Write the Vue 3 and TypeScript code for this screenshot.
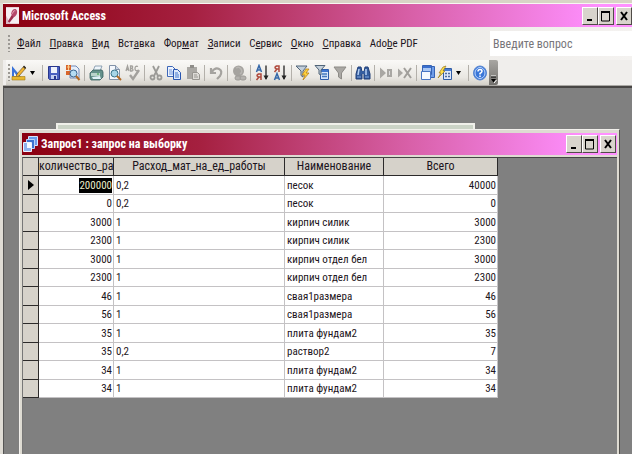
<script setup lang="ts">
interface MenuEntry { before: string; key: string; after: string }
interface Row { qty: number; rate: string; name: string; total: number }
interface Tool { icon: string; label: string; drop?: boolean }

const menu: MenuEntry[] = [
  { before: '', key: 'Ф', after: 'айл' },
  { before: '', key: 'П', after: 'равка' },
  { before: '', key: 'В', after: 'ид' },
  { before: 'Вст', key: 'а', after: 'вка' },
  { before: 'Фор', key: 'м', after: 'ат' },
  { before: '', key: 'З', after: 'аписи' },
  { before: 'С', key: 'е', after: 'рвис' },
  { before: '', key: 'О', after: 'кно' },
  { before: '', key: 'С', after: 'правка' },
  { before: 'Ado', key: 'b', after: 'e PDF' },
]

const groups: Tool[][] = [
  [{ icon: 'design', label: 'Вид', drop: true }],
  [{ icon: 'save', label: 'Сохранить' }, { icon: 'find-file', label: 'Найти файл' }],
  [{ icon: 'print', label: 'Печать' }, { icon: 'preview', label: 'Просмотр' }, { icon: 'spell', label: 'Орфография' }],
  [{ icon: 'cut', label: 'Вырезать' }, { icon: 'copy', label: 'Копировать' }, { icon: 'paste', label: 'Вставить' }],
  [{ icon: 'undo', label: 'Отменить' }],
  [{ icon: 'link', label: 'Гиперссылка' }],
  [{ icon: 'sort-asc', label: 'По возрастанию' }, { icon: 'sort-desc', label: 'По убыванию' }],
  [{ icon: 'filter-sel', label: 'Фильтр по выделенному' }, { icon: 'filter-form', label: 'Изменить фильтр' }, { icon: 'filter', label: 'Применить фильтр' }],
  [{ icon: 'find', label: 'Найти' }],
  [{ icon: 'new-rec', label: 'Новая запись' }, { icon: 'del-rec', label: 'Удалить запись' }],
  [{ icon: 'database', label: 'Окно базы данных' }, { icon: 'new-obj', label: 'Новый объект', drop: true }],
  [{ icon: 'help', label: 'Справка' }],
]

const rows: Row[] = [
  { qty: 200000, rate: '0,2', name: 'песок', total: 40000 },
  { qty: 0, rate: '0,2', name: 'песок', total: 0 },
  { qty: 3000, rate: '1', name: 'кирпич силик', total: 3000 },
  { qty: 2300, rate: '1', name: 'кирпич силик', total: 2300 },
  { qty: 3000, rate: '1', name: 'кирпич отдел бел', total: 3000 },
  { qty: 2300, rate: '1', name: 'кирпич отдел бел', total: 2300 },
  { qty: 46, rate: '1', name: 'свая1размера', total: 46 },
  { qty: 56, rate: '1', name: 'свая1размера', total: 56 },
  { qty: 35, rate: '1', name: 'плита фундам2', total: 35 },
  { qty: 35, rate: '0,2', name: 'раствор2', total: 7 },
  { qty: 34, rate: '1', name: 'плита фундам2', total: 34 },
  { qty: 34, rate: '1', name: 'плита фундам2', total: 34 },
]
</script>

<template>
  <div class="app">
    <header class="titlebar">
      <svg class="app-icon" viewBox="0 0 14 18" aria-hidden="true">
        <rect width="14" height="18" fill="#f6eef2" />
        <path d="M0 18V9l5 9z" fill="#d9b9c6" />
        <path d="M2 15.500 6.500 8 9 10 4 16.500z" fill="#9c2f50" />
        <path d="M5.500 7C6 3 9 1 11 2.500s1 7-3 8.500z" fill="#b5486b" />
        <path d="M7 7c.5-2.500 2-3.500 3-3" stroke="#e9b3c5" fill="none" />
      </svg>
      <h1>Microsoft Access</h1>
      <div class="controls">
        <button class="ctl" aria-label="Свернуть"><svg viewBox="0 0 14 16"><path d="M4 12h5" stroke="#000" stroke-width="2" /></svg></button>
        <button class="ctl" aria-label="Развернуть"><svg viewBox="0 0 14 16"><path d="M2.500 4v9h8V4" stroke="#000" fill="none" /><path d="M2 4h9" stroke="#000" stroke-width="2" /></svg></button>
        <button class="ctl last" aria-label="Закрыть"><svg viewBox="0 0 14 16"><path d="m4 4 6 8m0-8-6 8" stroke="#000" stroke-width="2" /></svg></button>
      </div>
    </header>

    <div class="menubar">
      <span class="grip"></span>
      <nav class="menu">
        <a v-for="m in menu" :key="m.before + m.key + m.after" href="#">{{ m.before }}<u>{{ m.key }}</u>{{ m.after }}</a>
      </nav>
      <div class="ask">
        <input type="text" placeholder="Введите вопрос" aria-label="Введите вопрос" />
        <button aria-label="Список вопросов"><svg viewBox="0 0 8 5"><path d="M0 0h8L4 5z" fill="#000" /></svg></button>
      </div>
    </div>

    <div class="toolbar-row">
      <div class="toolbar">
        <span class="grip"></span>
        <template v-for="(g, gi) in groups" :key="gi">
          <span v-if="gi" class="sep"></span>
          <button v-for="t in g" :key="t.icon" class="tool" :class="{ drop: t.drop }" :aria-label="t.label">
            <svg class="ico" viewBox="0 0 16 18" aria-hidden="true">
              <g v-if="t.icon === 'design'">
                <path d="M1 2v12h10z" fill="#3a72d8" /><path d="M3 8v4h3z" fill="#f4f4f0" />
                <path d="m6 10 7-8 2 2-7 8-3 1z" fill="#f2b632" stroke="#5a4320" stroke-width=".6" /><path d="m12 3 1-1.500 2 2L14 5z" fill="#333" />
                <path d="M1 12.500h13V16H1z" fill="#e8b72e" stroke="#a37a14" stroke-width=".6" />
              </g>
              <g v-else-if="t.icon === 'save'">
                <path d="M2.500 2.500h11v13h-10l-1-1z" fill="#4a5fc0" stroke="#28368c" />
                <path d="M5 3h6v6H5z" fill="#eef1fb" /><path d="M5 11h6v4H5z" fill="#c4cdf0" /><path d="M8 12h2v3H8z" fill="#28368c" />
              </g>
              <g v-else-if="t.icon === 'find-file'">
                <path d="M5 2h6l3 3v9H5z" fill="#e6eefa" stroke="#7089b8" /><path d="M1 1h5v5H1zM1 7h4v4H1z" fill="#d9652b" /><path d="M2 3h3M3.500 1v5" stroke="#f7cd8c" />
                <circle cx="8.500" cy="9.500" r="3.500" fill="#b5dcf3" stroke="#39648f" /><path d="m11 12 3.500 4" stroke="#b36a25" stroke-width="2" />
              </g>
              <g v-else-if="t.icon === 'print'">
                <path d="m5 7 2-5h7l-2 5z" fill="#eef5fb" stroke="#7a8fa5" stroke-width=".8" />
                <path d="m2 9 3-3h9l1 2v5l-3 3H3l-1-2z" fill="#64918b" stroke="#38605f" stroke-width=".8" />
                <path d="M3 9h9v3H3z" fill="#b9d3cb" /><path d="m4 13 8-1 1 3H5z" fill="#dff0f7" /><path d="M9 10h2" stroke="#2a9a3a" />
              </g>
              <g v-else-if="t.icon === 'preview'">
                <path d="M3.500 1.500h6l4 4v10h-10z" fill="#f5f8fd" stroke="#8292a8" /><path d="M9.500 1.500v4h4" fill="#cad5e5" stroke="#8292a8" />
                <circle cx="8.500" cy="9.500" r="3.500" fill="#a7d6e8" stroke="#37738b" /><path d="m11 12 4 4" stroke="#b36a25" stroke-width="2" />
              </g>
              <g v-else-if="t.icon === 'spell'" fill="none" stroke="#a3a19d">
                <path d="m1 7 1.500-5L4 7M1.500 5.500h2M5.500 2v5h1.500q2-1 0-2.500h-1H7Q8.500 2 6.500 2zM13 2.500q-3-1-3 2t3 2" stroke-width="1.300" />
                <path d="m5 11 3 4 6-9" stroke-width="2.400" />
              </g>
              <g v-else-if="t.icon === 'cut'" fill="none" stroke="#9b9a97">
                <path d="m5 2 5 10m1-10L6 12" stroke-width="1.800" /><ellipse cx="4.500" cy="13.500" rx="2" ry="2" stroke-width="1.800" /><ellipse cx="11.500" cy="13.500" rx="2" ry="2" stroke-width="1.800" />
              </g>
              <g v-else-if="t.icon === 'copy'">
                <path d="M1.500 2.500h5l3 3v7h-8z" fill="#eef4fe" stroke="#3c66b8" /><path d="M3 6h3M3 8h4M3 10h4" stroke="#6d93d8" />
                <path d="M7.500 5.500h4l3 3v7h-7z" fill="#dce9fc" stroke="#2855b0" /><path d="M9 9h3M9 11h4M9 13h4" stroke="#4577cc" />
              </g>
              <g v-else-if="t.icon === 'paste'">
                <path d="M2 3h10v12H2z" fill="#aaa8a4" /><path d="M5 1h4v3H5z" fill="#8f8d89" />
                <path d="M7.500 8.500h5l2 2v5h-7z" fill="#dddbd7" stroke="#979590" /><path d="M9 11h3M9 13h4" stroke="#979590" />
              </g>
              <path v-else-if="t.icon === 'undo'" d="M3 4v5h5M3.500 8.500Q7 3 11 5t1 7l-3 3" fill="none" stroke="#a5a39f" stroke-width="2.200" />
              <g v-else-if="t.icon === 'link'">
                <circle cx="7.500" cy="7" r="5.500" fill="#a5a39f" /><path d="M5 4q3-2 5 1t-1 5" fill="none" stroke="#b9b7b3" stroke-width="1.500" />
                <rect x="4" y="12" width="6" height="4" rx="2" fill="#b4b2ae" stroke="#9c9a96" /><rect x="9" y="12" width="6" height="4" rx="2" fill="#b4b2ae" stroke="#9c9a96" />
              </g>
              <g v-else-if="t.icon === 'sort-asc' || t.icon === 'sort-desc'" fill="none">
                <path :transform="t.icon === 'sort-asc' ? '' : 'translate(0 8)'" d="m2.500 8 2.500-6.500L7.500 8M3.500 6h3" stroke="#3467a8" stroke-width="1.500" />
                <path :transform="t.icon === 'sort-asc' ? 'translate(0 8)' : ''" d="M7 8V2H4.500q-3 1.700 0 3H7M5 5 2.500 8" stroke="#b04a3d" stroke-width="1.500" />
                <path d="M12 1.500V15" stroke="#222" stroke-width="1.300" /><path d="M9.500 11.500h5L12 16z" fill="#222" />
              </g>
              <g v-else-if="t.icon === 'filter-sel'">
                <path d="M1 2h11L8 7v6l-2-1.500V7z" fill="#c3cfda" stroke="#506478" /><path d="m11 5-4 6h3l-2 5 6-7h-3l3-4z" fill="#ffd33d" stroke="#b6801b" stroke-width=".8" />
              </g>
              <g v-else-if="t.icon === 'filter-form'">
                <path d="M6.500 5.500h8v10h-8z" fill="#d6e5fa" stroke="#2e5ca9" /><path d="M7 6h7v2H7z" fill="#3e75cf" /><path d="M8 10h5M8 12.500h5" stroke="#4679bd" stroke-width="1.500" />
                <path d="M1 1.500h10L7 6v5L5 10V6z" fill="#c3cfda" stroke="#506478" />
              </g>
              <path v-else-if="t.icon === 'filter'" d="M2 3h12L9.500 9v6l-3-2V9z" fill="#aaa8a4" stroke="#8d8b87" />
              <g v-else-if="t.icon === 'find'">
                <path d="M3 3h3l1 5v7H1v-5zM10 3h3l2 7v5H9V8z" fill="#355d9e" stroke="#203f78" /><path d="M6 7h4v3H6z" fill="#355d9e" /><path d="M4 5 3 11M11 5v6" stroke="#b6d0f3" stroke-width="1.500" /><path d="M2 13h4M10 13h4" stroke="#7ca3dc" />
              </g>
              <g v-else-if="t.icon === 'new-rec'" fill="#a9a7a3"><path d="M2 3.500 8 9l-6 5.500zM9 5h5v8H9z" /><path d="M11.500 7v4" stroke="#ddd" /></g>
              <g v-else-if="t.icon === 'del-rec'"><path d="M1 4.500 6 9l-5 4.500z" fill="#a9a7a3" /><path d="m7 4 7 10m0-10L7 14" stroke="#a09e9a" stroke-width="2" /></g>
              <g v-else-if="t.icon === 'database'">
                <path d="M5.500 2.500h9v11h-9z" fill="#6d9ce8" stroke="#3563b5" /><path d="M2.500 1.500h9v9h-9z" fill="#a9c7f4" stroke="#3563b5" /><path d="M3 2h8v2H3z" fill="#3a6fce" />
                <path d="M1.500 7.500h9v8h-9z" fill="#f4f8ff" stroke="#4674c4" />
              </g>
              <g v-else-if="t.icon === 'new-obj'">
                <path d="M6.500 4.500h8v11h-8z" fill="#dfe9fa" stroke="#315da5" /><path d="M7 5h7v2H7z" fill="#4a7dd2" /><path d="M8 9.500h2m1 0h2M8 12.500h2m1 0h2" stroke="#506c9c" stroke-width="1.500" />
                <path d="M9 2 6 7h2l-7 7 3-5H2l4-6z" fill="#ffe04a" stroke="#9b7b1e" stroke-width=".7" />
              </g>
              <g v-else-if="t.icon === 'help'">
                <ellipse cx="8" cy="9" rx="6.500" ry="7" fill="#3976d8" stroke="#5a87d0" /><ellipse cx="8" cy="9" rx="5" ry="5.500" fill="none" stroke="#bcd5fb" />
                <path d="M6 7.500Q6 5.500 8 5.500t2 1.700Q10 8.500 8 9.500v1M8 11.500V13" stroke="#fff" fill="none" stroke-width="1.500" />
              </g>
            </svg>
            <svg v-if="t.drop" class="arrow" viewBox="0 0 5 4" aria-hidden="true"><path d="M0 0h5L2.500 4z" fill="#000" /></svg>
          </button>
        </template>
      </div>
      <button class="overflow" aria-label="Параметры панели инструментов">
        <svg viewBox="0 0 7 8"><path d="M1 1h5" stroke="#fff" /><path d="M1 2h5" stroke="#000" /><path d="M1 4h5L3.500 7.500z" fill="#000" /><path d="m4 8 2.500-3" stroke="#fff" /></svg>
      </button>
    </div>

    <main class="workspace">
      <div class="back-window"></div>
      <section class="window">
        <header class="child-title">
          <svg class="query-icon" viewBox="0 0 15 18" aria-hidden="true">
            <path d="M5.500 1.500h9v9h-9z" fill="#6b9cec" stroke="#d6e5fc" /><path d="M3.500 4.500h8v9h-8z" fill="#3c72cf" stroke="#b9d2f8" /><path d="M.5 7.500h8v9h-8z" fill="#8fb3ee" stroke="#edf4ff" /><path d="M4 8h4v5H4z" fill="#f8fbff" />
          </svg>
          <h2>Запрос1 : запрос на выборку</h2>
          <div class="controls">
            <button class="ctl" aria-label="Свернуть окно"><svg viewBox="0 0 14 16"><path d="M4 12h5" stroke="#000" stroke-width="2" /></svg></button>
            <button class="ctl" aria-label="Развернуть окно"><svg viewBox="0 0 14 16"><path d="M2.500 4v9h8V4" stroke="#000" fill="none" /><path d="M2 4h9" stroke="#000" stroke-width="2" /></svg></button>
            <button class="ctl last" aria-label="Закрыть окно"><svg viewBox="0 0 14 16"><path d="m4 4 6 8m0-8-6 8" stroke="#000" stroke-width="2" /></svg></button>
          </div>
        </header>
        <div class="sheet">
          <table>
            <colgroup><col class="c-sel" /><col class="c-qty" /><col class="c-rate" /><col class="c-name" /><col class="c-total" /></colgroup>
            <thead>
              <tr><th></th><th scope="col">количество_ра</th><th scope="col">Расход_мат_на_ед_работы</th><th scope="col">Наименование</th><th scope="col">Всего</th></tr>
            </thead>
            <tbody>
              <tr v-for="(r, i) in rows" :key="i">
                <td class="selector"><svg v-if="i === 0" viewBox="0 0 6 10" aria-hidden="true"><path d="M0 0v10l6-5z" fill="#000" /></svg></td>
                <td class="num"><mark v-if="i === 0">{{ r.qty }}</mark><template v-else>{{ r.qty }}</template></td>
                <td>{{ r.rate }}</td>
                <td>{{ r.name }}</td>
                <td class="num">{{ r.total }}</td>
              </tr>
            </tbody>
          </table>
        </div>
      </section>
    </main>
  </div>
</template>

<style>
body { margin: 0; }
</style>

<style scoped>
.app {
  box-sizing: border-box;
  height: 100vh;
  display: flex;
  flex-direction: column;
  overflow: hidden;
  padding-left: 3px;
  background: #dfdcd5;
  border-top: 3px solid #d8d4c6;
  font-family: "Liberation Sans Narrow", "Arial Narrow", "Roboto Condensed", "Liberation Sans", sans-serif;
  font-size: 12px;
  color: #1c1420;
}
button { padding: 0; border: 0; background: none; font: inherit; }
svg { display: block; }
.titlebar, .child-title {
  flex: none;
  display: flex;
  align-items: center;
  color: #fff;
  background: linear-gradient(90deg, #8b0010 0%, #a52040 30%, #d860a8 65%, #ff90ff 95%);
}
.titlebar { height: 23px; padding-left: 3px; gap: 3px; border-top: 1px solid #f8f6f2; }
.app-icon { width: 13px; height: 17px; }
h1, h2 { flex: 1; margin: 0; font-size: 12px; line-height: 18px; font-weight: bold; white-space: nowrap; }
.controls { display: flex; }
.ctl {
  box-sizing: border-box;
  width: 16px;
  height: 18px;
  background: #d8d4cc;
  border: 1px solid;
  border-color: #fff #504c48 #504c48 #fff;
}
.ctl svg { width: 14px; height: 16px; }
.ctl.last { margin-left: 2px; }
.menubar {
  flex: none;
  height: 33px;
  display: flex;
  align-items: center;
  padding-left: 5px;
  background: linear-gradient(90deg, #dfdcd6, #f4f2f0);
}
.grip { flex: none; width: 3px; height: 17px; background: repeating-linear-gradient(#9c9994 0 2px, transparent 2px 4px) left / 2px 100% no-repeat; }
.menu { display: flex; justify-content: space-between; flex: none; width: 401px; margin-left: 6px; font-size: 11px; }
.menu a { color: inherit; text-decoration: none; white-space: nowrap; }
.ask { flex: 1; display: flex; align-items: center; height: 25px; margin-left: 72px; background: #fff; }
.ask input { flex: 1; min-width: 0; border: 0; padding: 0 3px; background: none; font: inherit; font-size: 12px; outline: none; }
.ask input::placeholder { color: #77757a; opacity: 1; }
.ask button { width: 10px; }
.ask button svg { width: 8px; height: 5px; }
.toolbar-row {
  flex: none;
  height: 25px;
  display: flex;
  padding-left: 3px;
  background: #f0eeec;
  border-bottom: 1px solid #aaa8a4;
}
.toolbar {
  flex: none;
  box-sizing: border-box;
  width: 483px;
  display: flex;
  align-items: center;
  justify-content: space-between;
  padding-left: 2px;
  background: linear-gradient(#faf9f7, #e9e7e2 70%, #d2cfc8);
}
.tool { display: flex; align-items: center; justify-content: center; width: 18px; height: 22px; }
.tool.drop { width: 29px; justify-content: flex-start; gap: 3px; }
.ico { width: 16px; height: 18px; }
.arrow { width: 5px; height: 4px; }
.sep { width: 4px; height: 16px; background: linear-gradient(#b3b0aa, #b3b0aa) center / 1px 100% no-repeat; }
.overflow { width: 9px; background: linear-gradient(#a8a6a2, #73716e); display: flex; align-items: flex-end; justify-content: center; padding-bottom: 2px; border-radius: 0 2px 2px 0; }
.overflow svg { width: 7px; height: 8px; }
.workspace {
  flex: 1;
  min-height: 0;
  position: relative;
  overflow: hidden;
  background: #808080;
  border-top: 2px solid #484644;
  border-left: 1px solid #555;
}
.back-window {
  position: absolute;
  top: 35px;
  left: 52px;
  right: 157px;
  height: 30px;
  background: #cbd3c6;
  border: 2px solid #f0f0ea;
}
.window {
  position: absolute;
  top: 41px;
  left: 15px;
  right: 12px;
  bottom: -20px;
  display: flex;
  flex-direction: column;
  padding: 2px;
  background: #dedbd2;
  border: 1px solid #f2f0ec;
  border-right-color: #55534f;
}
.child-title { height: 22px; margin: 1px 0 2px; padding: 0 1px; gap: 3px; }
.query-icon { width: 15px; height: 18px; }
.sheet { flex: 1; background: #808080; border-top: 1px solid #444; border-left: 1px solid #777; }
table { table-layout: fixed; width: 475px; height: 240px; border-collapse: separate; border-spacing: 0; background: #fff; font-size: 11px; line-height: 15px; }
.c-sel { width: 16px; }
.c-qty { width: 75px; }
.c-rate { width: 171px; }
.c-name { width: 99px; }
.c-total { width: 114px; }
th, td { padding: 1px 2px 0; white-space: nowrap; text-align: left; overflow: hidden; border-right: 1px solid #c4c2c4; border-bottom: 1px solid #c4c2c4; }
th { height: 17px; padding: 0; font-size: 12px; font-weight: normal; text-align: center; background: #d6d2ca; border-color: #2c2a2a; }
td.num { text-align: right; padding: 1px 1px 0; }
td.selector { background: #d6d2ca; border-color: #2c2a2a; }
.selector svg { width: 6px; height: 10px; margin-left: 3px; }
mark { display: inline-block; background: #000; color: #e8ecc8; }
</style>
